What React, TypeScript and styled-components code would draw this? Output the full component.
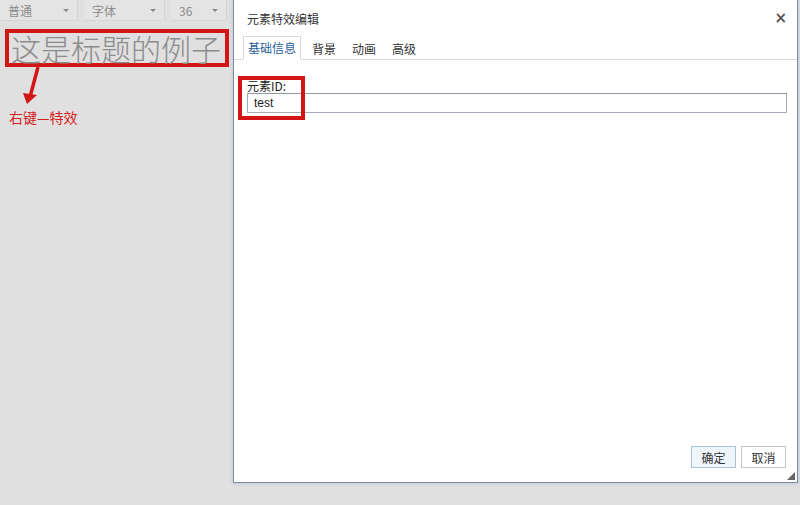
import styled, {createGlobalStyle} from "styled-components";

const GlobalStyle = createGlobalStyle`
  html, body {
    margin: 0;
    padding: 0;
    background: #e0e0e0;
    font-family: "Noto Sans CJK SC", "Noto Sans", sans-serif;
  }
`;

const Page = styled.div`
  width: 800px;
  height: 505px;
  display: flex;
  background: #e0e0e0;
  overflow: hidden;
`;

const Editor = styled.div`
  width: 233px;
  flex-shrink: 0;
  display: flex;
  flex-direction: column;
`;

const Toolbar = styled.div`
  display: flex;
  height: 21px;
  gap: 6px;
`;

const Select = styled.div<{ $w: number }>`
  width: ${p => p.$w}px;
  box-sizing: border-box;
  display: flex;
  align-items: center;
  justify-content: space-between;
  padding: 0 8px;
  background: #e4e4e4;
  border-right: 1px solid #d2d2d2;
  border-bottom: 1px solid #d6d6d6;
  color: #8a8a8a;
  font-size: 12px;
`;

const Caret = styled.span`
  width: 0;
  height: 0;
  border-left: 3px solid transparent;
  border-right: 3px solid transparent;
  border-top: 3px solid #888;
`;

const Heading = styled.div`
  margin: 8px 0 0 5px;
  width: 224px;
  height: 38px;
  box-sizing: border-box;
  border: 4px solid #d41515;
  display: flex;
  align-items: center;
  padding-left: 2px;
  color: #8c8c8c;
  font-size: 30px;
  font-weight: 300;
  line-height: 1;
  white-space: nowrap;
`;

const Arrow = styled.svg`
  display: block;
  margin-left: 20px;
`;

const Note = styled.div`
  margin: 2px 0 0 9px;
  color: #d42020;
  font-size: 14px;
`;

const Dialog = styled.div`
  position: relative;
  width: 565px;
  height: 483px;
  box-sizing: border-box;
  background: #fff;
  border: 1px solid #7c8ca2;
  border-top: none;
  box-shadow: 0 0 4px rgba(120, 150, 200, 0.45);
  display: flex;
  flex-direction: column;
`;

const Header = styled.div`
  height: 60px;
  box-sizing: border-box;
  border-bottom: 1px solid #dcdcdc;
  display: flex;
  flex-direction: column;
`;

const TitleRow = styled.div`
  height: 36px;
  display: flex;
  align-items: center;
  justify-content: space-between;
  padding: 0 10px 0 13px;
  font-size: 12px;
  color: #333;
`;

const Close = styled.span`
  font-size: 15px;
  font-weight: bold;
  color: #555;
  font-family: "DejaVu Sans", sans-serif;
`;

const Tabs = styled.div`
  display: flex;
  padding-left: 9px;
  height: 23px;
  align-items: flex-end;
`;

const Tab = styled.div<{ $active?: boolean }>`
  height: ${p => (p.$active ? 24 : 22)}px;
  box-sizing: border-box;
  padding: 0 ${p => (p.$active ? 4 : 7)}px 2px;
  margin-right: ${p => (p.$active ? 3 : 0)}px;
  display: flex;
  align-items: center;
  font-size: 12px;
  color: ${p => (p.$active ? "#2a5ea0" : "#333")};
  border: 1px solid ${p => (p.$active ? "#d6d6d6" : "transparent")};
  border-bottom: ${p => (p.$active ? "1px solid #fff" : "none")};
  background: ${p => (p.$active ? "#fff" : "transparent")};
  margin-bottom: -1px;
`;

const Body = styled.div`
  flex: 1;
  padding: 18px 10px 0 13px;
  position: relative;
`;

const Label = styled.div`
  font-size: 12px;
  color: #222;
  line-height: 15px;
`;

const Input = styled.div`
  height: 20px;
  box-sizing: border-box;
  border: 1px solid #a3acb8;
  border-top-color: #8e98a6;
  font-size: 12px;
  color: #222;
  display: flex;
  align-items: center;
  padding-left: 6px;
  font-family: "Liberation Sans", Arial, sans-serif;
`;

const Highlight = styled.div`
  position: absolute;
  left: 4px;
  top: 16px;
  width: 67px;
  height: 44px;
  box-sizing: border-box;
  border: 4px solid #d41515;
`;

const Footer = styled.div`
  display: flex;
  justify-content: flex-end;
  gap: 5px;
  padding: 0 11px 14px 0;
`;

const Button = styled.div<{ $primary?: boolean }>`
  width: 45px;
  height: 22px;
  box-sizing: border-box;
  display: flex;
  align-items: center;
  justify-content: center;
  font-size: 12px;
  color: #333;
  background: ${p => (p.$primary ? "#eef5fb" : "#fff")};
  border: 1px solid ${p => (p.$primary ? "#a9c4da" : "#c4c4c4")};
`;

const Grip = styled.div`
  position: absolute;
  right: 2px;
  bottom: 2px;
  width: 0;
  height: 0;
  border-left: 8px solid transparent;
  border-bottom: 8px solid #666;
`;

export default function App() {
    return (
        <Page>
            <GlobalStyle />
            <Editor>
                <Toolbar>
                    <Select $w={78}>普通<Caret /></Select>
                    <Select $w={81}>字体<Caret /></Select>
                    <Select $w={56}>36<Caret /></Select>
                </Toolbar>
                <Heading>这是标题的例子</Heading>
                <Arrow width="30" height="38" viewBox="0 0 30 38">
                    <line x1="18" y1="0" x2="10" y2="30" stroke="#d41515" strokeWidth="3.5" />
                    <polygon points="3,26 17,28 7,37" fill="#d41515" />
                </Arrow>
                <Note>右键—特效</Note>
            </Editor>
            <Dialog>
                <Header>
                    <TitleRow>
                        <span>元素特效编辑</span>
                        <Close>×</Close>
                    </TitleRow>
                    <Tabs>
                        <Tab $active>基础信息</Tab>
                        <Tab>背景</Tab>
                        <Tab>动画</Tab>
                        <Tab>高级</Tab>
                    </Tabs>
                </Header>
                <Body>
                    <Label>元素ID:</Label>
                    <Input>test</Input>
                    <Highlight />
                </Body>
                <Footer>
                    <Button $primary>确定</Button>
                    <Button>取消</Button>
                </Footer>
                <Grip />
            </Dialog>
        </Page>
    );
}
